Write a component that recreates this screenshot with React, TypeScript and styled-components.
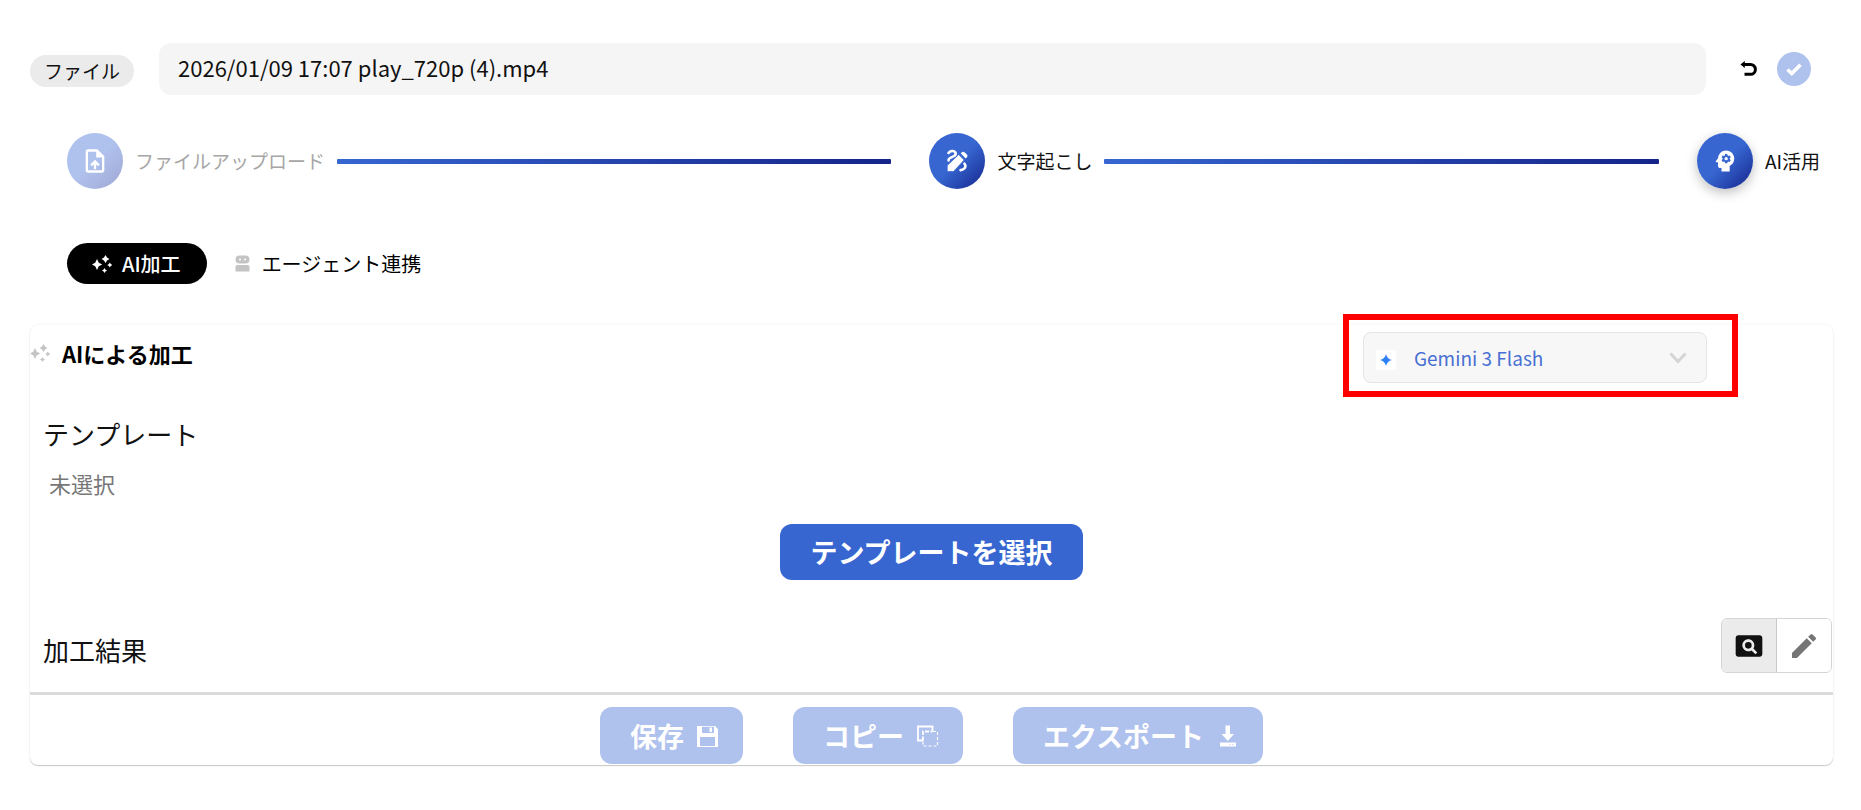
import React from 'react';
import styled, { createGlobalStyle, css } from 'styled-components';
import { MdEdit, MdOutlineUploadFile, MdPageview, MdPsychology } from 'react-icons/md';

const font = '"Noto Sans CJK JP", "Noto Sans", sans-serif';
const blue = '#3766d1';
const paleBlue = '#afc1ed';

const GlobalStyle = createGlobalStyle`
  *, *::before, *::after { box-sizing: border-box; }
  body { margin: 0; background: #fff; color: #111; font-family: ${font}; }
  button, input, select { font-family: inherit; }
  h1, h2, p { margin: 0; }
  svg { display: block; flex: none; }
`;

const Page = styled.main`
  padding: 43px 28px 44px 30px;
`;

const FileBar = styled.header`
  display: flex;
  align-items: center;
  padding-right: 22px;
`;

const Chip = styled.label`
  flex: none;
  height: 32px;
  padding: 0 14px;
  margin-top: 3px;
  border-radius: 16px;
  background: #ebebeb;
  font-size: 19px;
  line-height: 32px;
`;

const FileName = styled.input`
  flex: 1;
  min-width: 0;
  height: 52px;
  margin: 0 25px;
  padding: 0 19px 4px;
  border: 0;
  border-radius: 12px;
  background: #f5f5f5;
  color: #111;
  font-size: 22px;
`;

const IconButton = styled.button<{ $filled?: boolean }>`
  display: grid;
  place-items: center;
  width: 34px;
  height: 34px;
  margin-left: ${(p) => (p.$filled ? '12px' : '0')};
  padding: 0;
  border: 0;
  border-radius: 50%;
  background: ${(p) => (p.$filled ? paleBlue : 'transparent')};
  color: ${(p) => (p.$filled ? '#fff' : '#000')};
`;

const Stepper = styled.ol`
  display: flex;
  align-items: center;
  margin: 38px 0 0;
  padding: 0 13px 0 37px;
  list-style: none;
`;

const Step = styled.li<{ $last?: boolean }>`
  display: flex;
  flex: ${(p) => (p.$last ? 'none' : '1 1 auto')};
  align-items: center;
  gap: 12px;
  margin-right: ${(p) => (p.$last ? '0' : '38px')};
`;

const StepDot = styled.span<{ $faded?: boolean; $raised?: boolean }>`
  display: grid;
  flex: none;
  place-items: center;
  width: 56px;
  height: 56px;
  border-radius: 50%;
  background: ${(p) =>
    p.$faded
      ? 'linear-gradient(136deg, #afc1ed 50%, #a0a7d2 100%)'
      : 'linear-gradient(136deg, #3766d1 50%, #14248a 100%)'};
  box-shadow: ${(p) => (p.$raised ? '0 4px 12px rgba(0, 0, 0, 0.25)' : 'none')};
  color: #fff;
`;

const StepLabel = styled.span<{ $faded?: boolean }>`
  flex: none;
  color: ${(p) => (p.$faded ? '#a6a6a6' : '#111')};
  font-size: 19px;
  line-height: 28px;
`;

const StepLine = styled.span`
  flex: 1;
  height: 5px;
  border-radius: 1px;
  background: linear-gradient(90deg, #3766d1, #14248a);
`;

const Tabs = styled.div`
  display: flex;
  gap: 10px;
  margin: 54px 0 41px 37px;
`;

const Tab = styled.button<{ $active?: boolean }>`
  display: flex;
  align-items: center;
  gap: ${(p) => (p.$active ? '10px' : '12px')};
  height: 41px;
  padding: 0 26px 0 ${(p) => (p.$active ? '25px' : '18px')};
  border: 0;
  border-radius: 21px;
  background: ${(p) => (p.$active ? '#000' : 'transparent')};
  color: ${(p) => (p.$active ? '#fff' : '#000')};
  font-size: 20px;
  font-weight: ${(p) => (p.$active ? 500 : 400)};
  line-height: 28px;

  svg { color: ${(p) => (p.$active ? '#fff' : '#c4c4c4')}; }
`;

const Card = styled.section`
  padding-top: 7px;
  border-radius: 8px;
  background: #fff;
  box-shadow: 0 1px 1px rgba(0, 0, 0, 0.2), 0 0 3px rgba(0, 0, 0, 0.06);
`;

const CardHeader = styled.div`
  display: flex;
  align-items: flex-start;
  justify-content: space-between;
  padding-right: 126px;
`;

const Title = styled.h1`
  display: flex;
  align-items: center;
  gap: 12px;
  font-size: 22px;
  font-weight: 700;
  line-height: 42px;
  color: #000;

  svg { color: #c4c4c4; }
`;

const ModelPicker = styled.label`
  position: relative;
  display: block;
  width: 344px;
  color: #d5d5d5;

  &::after {
    content: '';
    position: absolute;
    inset: -18px -31px -14px -20px;
    border: 6px solid #f00;
    pointer-events: none;
  }
`;

const ModelSelect = styled.select`
  width: 100%;
  height: 51px;
  padding: 0 48px 0 50px;
  appearance: none;
  border: 1px solid #e4e4e4;
  border-radius: 8px;
  background: #f7f7f7;
  color: #4870d2;
  font-size: 19px;
`;

const overlay = css`
  position: absolute;
  top: 50%;
  transform: translateY(-50%);
  pointer-events: none;
`;

const ModelLogo = styled.span`
  ${overlay}
  left: 13px;
  display: grid;
  place-items: center;
  width: 20px;
  height: 20px;
  margin-top: 2px;
  border-radius: 2px;
  background: #fff;
`;

const Caret = styled.span`
  ${overlay}
  right: 20px;
`;

const SectionTitle = styled.h2`
  padding-left: 13px;
  font-size: 26px;
  font-weight: 400;
  line-height: 46px;
`;

const TemplateSection = styled.div`
  padding-top: 28px;
`;

const TemplateValue = styled.p`
  padding: 10px 0 25px 19px;
  color: #777;
  font-size: 22px;
  line-height: 32px;
`;

const Center = styled.div`
  display: flex;
  justify-content: center;
  gap: 50px;
`;

const ActionButton = styled.button<{ $muted?: boolean }>`
  display: flex;
  align-items: center;
  gap: 12px;
  height: ${(p) => (p.$muted ? '57px' : '56px')};
  padding: 0 ${(p) => (p.$muted ? '24px' : '30px')} 0 30px;
  border: 0;
  border-radius: 12px;
  background: ${(p) => (p.$muted ? paleBlue : blue)};
  color: #fff;
  font-size: 27px;
  font-weight: 700;
  line-height: 40px;
`;

const ResultHeader = styled.div`
  display: flex;
  align-items: flex-end;
  justify-content: space-between;
  margin-top: 38px;
  padding-bottom: 19px;
  border-bottom: 3px solid #dbdbdb;
`;

const ToggleGroup = styled.div`
  display: flex;
  height: 55px;
  margin-right: 1px;
  overflow: hidden;
  border: 1px solid #d4d4d4;
  border-radius: 6px;
`;

const Toggle = styled.button<{ $active?: boolean }>`
  display: grid;
  place-items: center;
  width: ${(p) => (p.$active ? '55px' : '54px')};
  padding: 0;
  border: 0;
  border-right: ${(p) => (p.$active ? '1px solid #c8c8c8' : '0')};
  background: ${(p) => (p.$active ? '#ebebeb' : '#fff')};
  color: ${(p) => (p.$active ? '#111' : '#757575')};
`;

const Actions = styled(Center)`
  padding: 12px 0 1px;
`;

const Sparkles = () => (
  <svg width="20" height="18" viewBox="0 0 20 18" fill="currentColor" aria-hidden="true">
    <path d="M5 4 6.800 7.700 10.200 9.500 6.800 11.300 5 15 3.200 11.300 -0.200 9.500 3.200 7.700Z" />
    <path d="M13.500 0 15 2.500 17.500 4 15 5.500 13.500 8 12 5.500 9.500 4 12 2.500Z" />
    <path d="M17.800 7.500 18.700 9.100 20.300 10 18.700 10.900 17.800 12.500 16.900 10.900 15.300 10 16.900 9.100Z" />
    <path d="M12.500 13 13.400 14.600 15 15.500 13.400 16.400 12.500 18 11.600 16.400 10 15.500 11.600 14.600Z" />
  </svg>
);

const Robot = () => (
  <svg width="15" height="17" viewBox="0 0 15 17" fill="currentColor" aria-hidden="true">
    <path
      fillRule="evenodd"
      d="M4.500 0.500h6a4 4 0 0 1 0 8h-6a4 4 0 0 1 0-8ZM5 3.500a1 1 0 1 0 0 2 1 1 0 0 0 0-2Zm5 0a1 1 0 1 0 0 2 1 1 0 0 0 0-2Z"
    />
    <path d="M2.500 10h10A2 2 0 0 1 14.500 12v4.500H0.500V12a2 2 0 0 1 2-2Z" />
  </svg>
);

const Undo = () => (
  <svg width="17" height="17" viewBox="0 0 17 17" aria-hidden="true">
    <path d="M3 3.500h7.500a4.900 4.900 0 0 1 0 9.800H4.500" fill="none" stroke="#000" strokeWidth="3" />
    <path d="M0.500 3.500 4.800 0v7Z" fill="#000" />
  </svg>
);

const Check = () => (
  <svg width="16" height="13" viewBox="0 0 16 13" fill="none" aria-hidden="true">
    <path d="M1.500 6.500 5.800 10.500 14.500 1.700" stroke="currentColor" strokeWidth="3.600" />
  </svg>
);

const PenScribble = () => (
  <svg width="28" height="28" viewBox="0 0 28 28" aria-hidden="true">
    <path
      d="M5.500 6C7 4 10.800 3 12.200 5.200c1.600 2.700-1.200 4-3.400 4.900C6.600 11 5.200 11.800 5.600 13.400M21.400 16.600c1.400 1.500 1.400 3.800-.3 5-.9.800-2.200 1.300-3.600 1.500"
      fill="none"
      stroke="currentColor"
      strokeWidth="2.600"
      strokeLinecap="round"
    />
    <path d="M4.200 24.600V18.400L15.700 7.500l5.500 5.500L10.500 24.600Z" fill="currentColor" stroke={blue} strokeWidth="0.800" />
    <path d="M17.700 6.300 18.600 5.400c1-1 2.200-1 3.200 0l1.900 1.900c1 1 1 2.200 0 3.200L22.600 11.500Z" fill="currentColor" />
  </svg>
);

const GeminiStar = () => (
  <svg width="12" height="12" viewBox="0 0 12 12" aria-hidden="true">
    <defs>
      <linearGradient id="gemini" x1="0" y1="1" x2="1" y2="0">
        <stop offset="0.200" stopColor="#1c7df5" />
        <stop offset="0.600" stopColor="#3280f5" />
        <stop offset="1" stopColor="#a88bdc" />
      </linearGradient>
    </defs>
    <path d="M6 0C6.900 3.400 8.600 5.100 12 6 8.600 6.900 6.900 8.600 6 12 5.100 8.600 3.400 6.900 0 6 3.400 5.100 5.100 3.400 6 0Z" fill="url(#gemini)" />
  </svg>
);

const Chevron = () => (
  <svg width="18" height="12" viewBox="0 0 18 12" fill="none" aria-hidden="true">
    <path d="M1.500 1.500 9 9.500 16.500 1.500" stroke="currentColor" strokeWidth="3" />
  </svg>
);

const Floppy = () => (
  <svg width="23" height="22" viewBox="0 0 23 22" aria-hidden="true">
    <path
      fill="currentColor"
      fillRule="evenodd"
      d="M1 1h18l3 3v18H1ZM6 1.800V8h12V1.800ZM4 12v9h15v-9Z"
    />
    <path d="M13.500 2.500h2.500v4.500h-2.500Z" fill="currentColor" />
  </svg>
);

const CopySquares = () => (
  <svg width="23" height="22" viewBox="0 0 23 22" fill="none" stroke="currentColor" aria-hidden="true">
    <path d="M7 15.500H2V1.500h14.500V6" strokeWidth="1.800" />
    <path d="M7 15.500V6.500h9.500" strokeWidth="1.800" strokeDasharray="4 1.500" />
    <path d="M17 6.500h4.500V21H7v-5" strokeWidth="1.200" strokeDasharray="3 2" />
  </svg>
);

const Download = () => (
  <svg width="23" height="22" viewBox="0 0 23 22" fill="currentColor" aria-hidden="true">
    <path d="M9.500 0.500h4.500v8.500h4L11.800 16 5.500 9h4Z" />
    <path fillRule="evenodd" d="M4 17.500h16V21.500H4Zm9.500 1.800v.8h1.200v-.8Zm2.600 0v.8h1.200v-.8Z" />
  </svg>
);

export default function App() {
  return (
    <>
      <GlobalStyle />
      <Page>
        <FileBar>
          <Chip htmlFor="file-name">ファイル</Chip>
          <FileName id="file-name" readOnly value="2026/01/09 17:07 play_720p (4).mp4" />
          <IconButton type="button" aria-label="元に戻す">
            <Undo />
          </IconButton>
          <IconButton type="button" $filled aria-label="確定">
            <Check />
          </IconButton>
        </FileBar>

        <Stepper>
          <Step>
            <StepDot $faded>
              <MdOutlineUploadFile size={28} />
            </StepDot>
            <StepLabel $faded>ファイルアップロード</StepLabel>
            <StepLine />
          </Step>
          <Step>
            <StepDot>
              <PenScribble />
            </StepDot>
            <StepLabel>文字起こし</StepLabel>
            <StepLine />
          </Step>
          <Step $last>
            <StepDot $raised>
              <MdPsychology size={28} />
            </StepDot>
            <StepLabel>AI活用</StepLabel>
          </Step>
        </Stepper>

        <Tabs role="tablist">
          <Tab type="button" role="tab" aria-selected $active>
            <Sparkles />
            AI加工
          </Tab>
          <Tab type="button" role="tab" aria-selected={false}>
            <Robot />
            エージェント連携
          </Tab>
        </Tabs>

        <Card>
          <CardHeader>
            <Title>
              <Sparkles />
              AIによる加工
            </Title>
            <ModelPicker>
              <ModelSelect aria-label="モデル" defaultValue="gemini-3-flash">
                <option value="gemini-3-flash">Gemini 3 Flash</option>
              </ModelSelect>
              <ModelLogo>
                <GeminiStar />
              </ModelLogo>
              <Caret>
                <Chevron />
              </Caret>
            </ModelPicker>
          </CardHeader>

          <TemplateSection>
            <SectionTitle>テンプレート</SectionTitle>
            <TemplateValue>未選択</TemplateValue>
            <Center>
              <ActionButton type="button">テンプレートを選択</ActionButton>
            </Center>
          </TemplateSection>

          <ResultHeader>
            <SectionTitle>加工結果</SectionTitle>
            <ToggleGroup>
              <Toggle type="button" $active aria-pressed aria-label="プレビュー">
                <MdPageview size={32} />
              </Toggle>
              <Toggle type="button" aria-pressed={false} aria-label="編集">
                <MdEdit size={32} />
              </Toggle>
            </ToggleGroup>
          </ResultHeader>

          <Actions>
            <ActionButton type="button" $muted>
              保存
              <Floppy />
            </ActionButton>
            <ActionButton type="button" $muted>
              コピー
              <CopySquares />
            </ActionButton>
            <ActionButton type="button" $muted>
              エクスポート
              <Download />
            </ActionButton>
          </Actions>
        </Card>
      </Page>
    </>
  );
}
